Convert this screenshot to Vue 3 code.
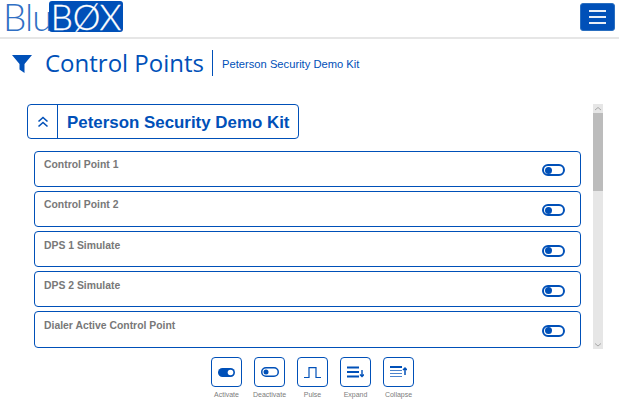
<script setup>
const points = [
  'Control Point 1',
  'Control Point 2',
  'DPS 1 Simulate',
  'DPS 2 Simulate',
  'Dialer Active Control Point'
];

const actions = ['Activate', 'Deactivate', 'Pulse', 'Expand', 'Collapse'];
</script>

<template>
  <div class="page">
    <header class="topbar">
      <div class="logo">
        <span class="logo-blu">Blu</span>
        <span class="logo-box">BØX</span>
      </div>
      <button class="menu-btn" aria-label="Menu">
        <span></span>
        <span></span>
        <span></span>
      </button>
    </header>

    <div class="title-row">
      <svg class="filter-icon" width="20" height="20" viewBox="0 0 20 20">
        <path d="M0 2h20L12.500 11V20L7.500 16.500V11Z" fill="#0050b8" />
      </svg>
      <h1>Control Points</h1>
      <span class="title-sub">Peterson Security Demo Kit</span>
    </div>

    <div class="content">
      <main class="list-area">
        <div class="group-head">
          <span class="collapse-btn">
            <svg width="12" height="12" viewBox="0 0 12 12" fill="none" stroke="#0050b8" stroke-width="1.600">
              <path d="M1.500 5.500L6 1.500L10.500 5.500M1.500 10.500L6 6.500L10.500 10.500" />
            </svg>
          </span>
          <span class="group-name">Peterson Security Demo Kit</span>
        </div>
        <div class="cards">
          <div v-for="point in points" :key="point" class="card">
            <span class="card-name">{{ point }}</span>
            <span class="toggle"><i></i></span>
          </div>
        </div>
      </main>
      <div class="scrollbar">
        <svg width="10" height="9" viewBox="0 0 10 9" fill="none" stroke="#a8a8a8">
          <path d="M2 6L5 3.500L8 6" />
        </svg>
        <div class="thumb"></div>
        <div class="track"></div>
        <svg width="10" height="9" viewBox="0 0 10 9" fill="none" stroke="#a8a8a8">
          <path d="M2 3.500L5 6L8 3.500" />
        </svg>
      </div>
    </div>

    <footer class="actions">
      <div v-for="action in actions" :key="action" class="action">
        <span class="action-btn">
          <svg v-if="action === 'Activate'" width="17" height="9" viewBox="0 0 17 9">
            <rect width="17" height="9" rx="4.500" fill="#0050b8" />
            <circle cx="12.500" cy="4.500" r="2.800" fill="#fff" />
          </svg>
          <svg v-else-if="action === 'Deactivate'" width="18" height="10" viewBox="0 0 18 10">
            <rect x="0.750" y="0.750" width="16.500" height="8.500" rx="4.250" fill="#fff" stroke="#0050b8" stroke-width="1.500" />
            <circle cx="5" cy="5" r="2.500" fill="#0050b8" />
          </svg>
          <svg v-else-if="action === 'Pulse'" width="17" height="11" viewBox="0 0 17 11" fill="none" stroke="#0050b8" stroke-width="1.200">
            <path d="M0 10.500H5V0.600H12V10.500H17" />
          </svg>
          <svg v-else-if="action === 'Expand'" width="17" height="12" viewBox="0 0 17 12" fill="none" stroke="#0050b8">
            <path d="M0 1.500H12M0 6H12M0 10.500H12" stroke-width="2" />
            <path d="M15 4V10.500M13 8.500L15 10.500L17 8.500" stroke-width="1.400" />
          </svg>
          <svg v-else width="17" height="12" viewBox="0 0 17 12" fill="none" stroke="#0050b8">
            <path d="M0 1H12" stroke-width="2" />
            <path d="M0 4.500H12M0 7.500H12M0 10.500H12" stroke-width="1" opacity="0.700" />
            <path d="M15 9V2M13 4L15 2L17 4" stroke-width="1.500" />
          </svg>
        </span>
        <span class="action-label">{{ action }}</span>
      </div>
    </footer>
  </div>
</template>

<style>
html,
body {
  margin: 0;
  background: #fff;
  overflow: hidden;
}
</style>

<style scoped>
.page {
  width: 619px;
  height: 401px;
  overflow: hidden;
  display: flex;
  flex-direction: column;
  font-family: "Liberation Sans", Arial, sans-serif;
  color: #0050b8;
  background: #fff;
}

.topbar {
  height: 37px;
  box-sizing: content-box;
  border-bottom: 2px solid #e6e6e6;
  display: flex;
  align-items: flex-start;
  justify-content: space-between;
  padding: 0 4px 0 3px;
}

.logo {
  display: flex;
  align-items: flex-start;
  margin-top: 1px;
}

.logo-blu {
  font-family: Lato, sans-serif;
  font-weight: 300;
  font-size: 37px;
  line-height: 32px;
  letter-spacing: -1px;
  color: #2f6fc4;
  width: 46px;
}

.logo-box {
  width: 74px;
  height: 31px;
  background: #0050b8;
  border-radius: 3px;
  color: #fff;
  font-family: Lato, sans-serif;
  font-weight: 300;
  font-size: 35px;
  line-height: 31px;
  text-align: center;
  -webkit-text-stroke: 0.300px #fff;
}

.menu-btn {
  width: 35px;
  height: 28px;
  margin-top: 3px;
  padding: 0;
  border: 1px solid #2a6fc0;
  border-radius: 3px;
  background: #0050b8;
  display: flex;
  flex-direction: column;
  align-items: center;
  justify-content: center;
  gap: 4px;
}

.menu-btn span {
  width: 17px;
  height: 2px;
  background: #e8eef8;
}

.title-row {
  height: 48px;
  display: flex;
  align-items: center;
  padding-left: 12px;
}

.filter-icon {
  flex: none;
  margin-right: 13px;
}

h1 {
  margin: 0;
  font-family: "Open Sans", sans-serif;
  font-weight: 400;
  font-size: 24px;
  line-height: 25px;
  padding-right: 8px;
  height: 27px;
}

.title-sub {
  border-left: 1px solid #0050b8;
  height: 26px;
  line-height: 28px;
  padding-left: 9px;
  font-size: 11.200px;
}

.content {
  display: flex;
  height: 245px;
  margin-top: 17px;
  padding-left: 27px;
}

.list-area {
  width: 566px;
}

.group-head {
  width: 272px;
  height: 35px;
  box-sizing: border-box;
  border: 1px solid #0050b8;
  border-radius: 4px;
  display: flex;
  align-items: stretch;
}

.collapse-btn {
  flex: none;
  width: 29px;
  border-right: 1px solid #0050b8;
  display: flex;
  align-items: center;
  justify-content: center;
}

.group-name {
  padding: 2px 0 0 9px;
  font-size: 16.900px;
  font-weight: bold;
  line-height: 32px;
  white-space: nowrap;
}

.cards {
  margin: 11.900px 0 0 7px;
  width: 547px;
  display: flex;
  flex-direction: column;
  gap: 4px;
}

.card {
  height: 36.150px;
  box-sizing: border-box;
  border: 1px solid #0050b8;
  border-radius: 4px;
  padding: 6.350px 15px 0 9px;
  display: flex;
  justify-content: space-between;
}

.card-name {
  font-size: 10.400px;
  font-weight: bold;
  line-height: 13px;
  color: #787878;
}

.toggle {
  width: 23px;
  height: 12px;
  box-sizing: border-box;
  margin-top: 6px;
  border: 2px solid #0050b8;
  border-radius: 6px;
  padding-left: 1px;
  display: flex;
  align-items: center;
}

.toggle i {
  width: 7px;
  height: 7px;
  border-radius: 50%;
  background: #0050b8;
}

.scrollbar {
  width: 10px;
  background: #e6e6e6;
  display: flex;
  flex-direction: column;
}

.scrollbar svg {
  flex: none;
}

.thumb {
  height: 78px;
  background: #bcbcbc;
}

.track {
  flex: 1;
}

.actions {
  margin-top: 8px;
  display: flex;
  padding-left: 205px;
}

.action {
  width: 43px;
  display: flex;
  flex-direction: column;
  align-items: center;
}

.action-btn {
  width: 31px;
  height: 30px;
  box-sizing: border-box;
  border: 1px solid #0050b8;
  border-radius: 4px;
  display: flex;
  align-items: center;
  justify-content: center;
}

.action-label {
  margin-top: 3px;
  font-size: 7px;
  line-height: 9px;
  color: #7c7c7c;
  white-space: nowrap;
}
</style>
